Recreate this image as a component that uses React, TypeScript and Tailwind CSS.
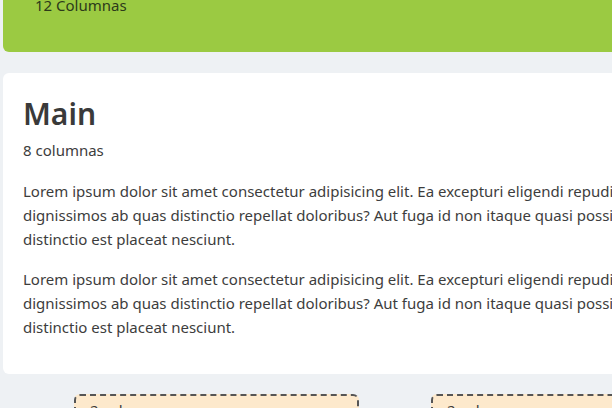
import React from "react";

const lines = [
  "Lorem ipsum dolor sit amet consectetur adipisicing elit. Ea excepturi eligendi repudiandae inventore",
  "dignissimos ab quas distinctio repellat doloribus? Aut fuga id non itaque quasi possimus fugiat",
  "distinctio est placeat nesciunt.",
];

const Paragraph: React.FC = () => (
  <p className="mb-4 leading-6">
    {lines.map((l) => (
      <span key={l} className="block whitespace-nowrap">
        {l}
      </span>
    ))}
  </p>
);

const App: React.FC = () => {
  return (
    <div
      className="h-[408px] w-[612px] overflow-hidden bg-[#eef1f4] text-[#3d3d3d]"
      style={{ fontFamily: '"Noto Sans", "Open Sans", sans-serif' }}
    >
      <div className="-mt-[20px] w-[900px] pl-[3px]">
        {/* Header */}
        <header className="h-[72px] rounded-md bg-[#9bca42] pl-[32px] pt-[15px] text-[15px] leading-5 text-[#2d3a1a]">
          12 Columnas
        </header>

        {/* Main card */}
        <section className="mt-[21px] h-[301px] rounded-md bg-white px-5 pt-[19px]">
          <h1 className="text-[30px] font-semibold leading-[44px] text-[#3a3a3a]">Main</h1>
          <p className="mt-[2px] text-[15px] leading-6">8 columnas</p>
          <div className="mt-[17px] text-[15px]">
            <Paragraph />
            <Paragraph />
          </div>
        </section>

        {/* Sidebars */}
        <div className="mt-[20px] flex gap-[72px] pl-[71px]">
          <div className="h-[60px] w-[285px] rounded-md border-2 border-dashed border-[#555] bg-[#fde9cc] px-[14px] pt-[2px] text-[15px] leading-6">
            2 columnas
          </div>
          <div className="h-[60px] w-[285px] rounded-md border-2 border-dashed border-[#555] bg-[#fde9cc] px-[14px] pt-[2px] text-[15px] leading-6">
            2 columnas
          </div>
        </div>
      </div>
    </div>
  );
};

export default App;
